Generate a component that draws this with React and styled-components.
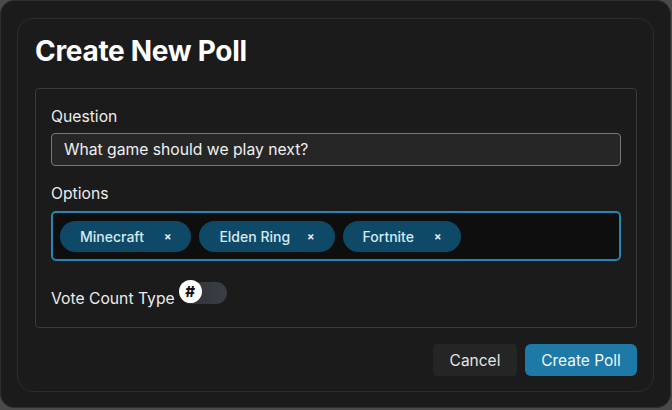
import React from "react";
import styled, { createGlobalStyle } from "styled-components";

const Global = createGlobalStyle`
  html, body { margin: 0; padding: 0; background: #4a4a4a; }
  body { font-family: Inter, "DejaVu Sans", sans-serif; }
  * { box-sizing: border-box; }
`;

const Frame = styled.div`
  width: 671px;
  height: 408px;
  background: #1b1b1b;
  border: 1px solid #2e2e2e;
  border-radius: 14px;
  padding: 17px 16px 15px 16px;
`;

const Dialog = styled.div`
  height: 100%;
  border: 1px solid #2c2c2c;
  border-radius: 16px;
  padding: 16px 16px 0 17px;
  display: flex;
  flex-direction: column;
`;

const Title = styled.h1`
  margin: 0;
  font-size: 28px;
  line-height: 32px;
  font-weight: 700;
  color: #ffffff;
  letter-spacing: -0.3px;
`;

const Fieldset = styled.div`
  margin-top: 21px;
  border: 1px solid #3a3a3a;
  border-radius: 4px;
  padding: 18px 15px 18px 15px;
  display: flex;
  flex-direction: column;
`;

const Label = styled.div`
  color: #ececec;
  font-size: 15.7px;
  line-height: 20px;
  margin-bottom: ${(p) => p.$mb || 6}px;
  margin-top: ${(p) => p.$mt || 0}px;
`;

const Input = styled.div`
  height: 33px;
  background: #262626;
  border: 1px solid #777;
  border-radius: 4px;
  padding: 0 12px;
  display: flex;
  align-items: center;
  color: #f0f0f0;
  font-size: 15.7px;
`;

const TagBox = styled.div`
  height: 50px;
  background: #0e0e0e;
  border: 2px solid #2885b3;
  border-radius: 5px;
  padding: 0 7px;
  display: flex;
  align-items: center;
  gap: 8px;
`;

const Chip = styled.div`
  height: 31px;
  border-radius: 16px;
  background: #0e4a67;
  color: #d6e8f1;
  font-size: 14px;
  font-weight: 500;
  display: flex;
  align-items: center;
  padding: 0 20px 0 20px;
`;

const Close = styled.span`
  margin-left: ${(p) => p.$gap}px;
  font-size: 11px;
  font-weight: 700;
  color: #e6f0f5;
`;

const VoteRow = styled.div`
  margin-top: 20px;
  display: flex;
  align-items: flex-start;
  gap: 5px;
`;

const VoteLabel = styled.div`
  color: #ececec;
  font-size: 15.7px;
  line-height: 20px;
  padding-top: 8px;
`;

const Toggle = styled.div`
  position: relative;
  width: 47px;
  height: 22px;
  margin-top: 1px;
  border-radius: 11px;
  background: linear-gradient(90deg, #2f3236, #3b3e44);
`;

const Knob = styled.div`
  position: absolute;
  left: -1px;
  top: -2px;
  width: 23px;
  height: 23px;
  border-radius: 50%;
  background: #ffffff;
  color: #111;
  font-size: 15px;
  font-weight: 800;
  display: flex;
  align-items: center;
  justify-content: center;
`;

const Actions = styled.div`
  margin-top: 16px;
  display: flex;
  justify-content: flex-end;
  gap: 8px;
`;

const Button = styled.button`
  height: 32px;
  border: none;
  border-radius: ${(p) => (p.$primary ? 6 : 4)}px;
  background: ${(p) => (p.$primary ? "#1d79a6" : "#252525")};
  color: ${(p) => (p.$primary ? "#f2f7fa" : "#e4e4e4")};
  font-family: inherit;
  font-size: 15.5px;
  padding: 0;
  width: ${(p) => p.$w}px;
`;

const options = [
  { name: "Minecraft", gap: 20 },
  { name: "Elden Ring", gap: 17 },
  { name: "Fortnite", gap: 20 },
];

export default function App() {
  return (
    <>
      <Global />
      <Frame>
        <Dialog>
          <Title>Create New Poll</Title>
          <Fieldset>
            <Label>Question</Label>
            <Input>What game should we play next?</Input>
            <Label $mt={18} $mb={7}>Options</Label>
            <TagBox>
              {options.map((o) => (
                <Chip key={o.name}>
                  {o.name}
                  <Close $gap={o.gap}>×</Close>
                </Chip>
              ))}
            </TagBox>
            <VoteRow>
              <VoteLabel>Vote Count Type</VoteLabel>
              <Toggle>
                <Knob>#</Knob>
              </Toggle>
            </VoteRow>
          </Fieldset>
          <Actions>
            <Button $w={84}>Cancel</Button>
            <Button $primary $w={112}>Create Poll</Button>
          </Actions>
        </Dialog>
      </Frame>
    </>
  );
}
